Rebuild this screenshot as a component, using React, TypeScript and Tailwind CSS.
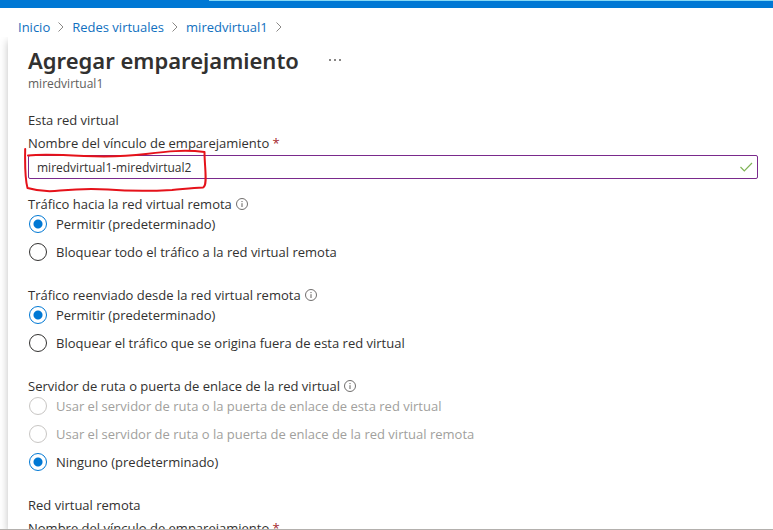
import { Fragment, useState } from "react";

type Option = { value: string; label: string; disabled?: boolean };

function InfoIcon() {
  return (
    <svg className="size-3" viewBox="0 0 12 12" fill="none" stroke="#605e5c" aria-hidden="true">
      <circle cx="6" cy="6" r="5.5" strokeWidth="0.9" />
      <path d="M6 5.2V9" strokeWidth="1" />
      <path d="M6 3v1.1" strokeWidth="1" />
    </svg>
  );
}

function ChevronIcon() {
  return (
    <svg className="h-3 w-2" viewBox="0 0 8 12" fill="none" stroke="#8a8886" aria-hidden="true">
      <path d="M1.5 1.5 6 6 1.5 10.5" />
    </svg>
  );
}

function RadioGroup({ name, legend, options, initial }: { name: string; legend: string; options: Option[]; initial: string }) {
  const [value, setValue] = useState(initial);
  return (
    <div role="radiogroup" aria-labelledby={`${name}-label`} className="mb-[23px]">
      <div className="flex h-5 items-center gap-1">
        <span id={`${name}-label`}>{legend}</span>
        <button type="button" aria-label="Información">
          <InfoIcon />
        </button>
      </div>
      <div className="flex flex-col gap-2">
        {options.map((o) => (
          <label key={o.value} className={`flex h-5 items-center gap-2 ${o.disabled ? "text-[#a19f9d]" : ""}`}>
            <input
              type="radio"
              name={name}
              value={o.value}
              checked={value === o.value}
              disabled={o.disabled}
              onChange={() => setValue(o.value)}
              className="m-px size-[18px] shrink-0 appearance-none rounded-full border border-[#323130] bg-white bg-center bg-no-repeat checked:border-[#0078d4] checked:bg-[radial-gradient(circle,#0078d4_4px,transparent_5px)] disabled:border-[#c8c6c4]"
            />
            {o.label}
          </label>
        ))}
      </div>
    </div>
  );
}

const crumbs = ["Inicio", "Redes virtuales", "miredvirtual1"];

export default function App() {
  const [linkName, setLinkName] = useState("miredvirtual1-miredvirtual2");
  return (
    <div className="flex h-screen flex-col overflow-hidden border-b border-[#b3b0ad] bg-white font-['Open_Sans','Noto_Sans',sans-serif] text-[13px] leading-5 text-[#323130]">
      <div className="flex h-2 shrink-0 justify-end bg-[#0078d4]">
        <div className="h-px w-[73%] bg-[#83d8f5]" />
      </div>

      <nav aria-label="Ruta de navegación" className="flex h-[29px] shrink-0 items-center gap-[7px] pt-2 pl-[18px]">
        {crumbs.map((c) => (
          <Fragment key={c}>
            <a href="#" className="text-[#1070c0]">
              {c}
            </a>
            <ChevronIcon />
          </Fragment>
        ))}
      </nav>

      <div className="flex min-h-0 flex-1 overflow-hidden pl-2">
        <main className="min-w-0 flex-1 pr-[15px] pl-5 shadow-[0_4px_8px_rgba(0,0,0,0.25)]">
          <header className="pt-[7px]">
            <div className="flex h-8 items-center gap-7">
              <h1 className="font-['Noto_Sans',sans-serif] text-[22px] font-semibold">Agregar emparejamiento</h1>
              <button type="button" aria-label="Más opciones" className="flex gap-[3px] p-0.5">
                <span className="size-0.5 rounded-full bg-[#605e5c]" />
                <span className="size-0.5 rounded-full bg-[#605e5c]" />
                <span className="size-0.5 rounded-full bg-[#605e5c]" />
              </button>
            </div>
            <p className="text-xs leading-4 text-[#605e5c]">miredvirtual1</p>
          </header>

          <section className="mt-[18px]">
            <h2 className="mb-[3px]">Esta red virtual</h2>
            <label htmlFor="link-name" className="mb-0.5 block">
              Nombre del vínculo de emparejamiento <span className="text-[#a4262c]">*</span>
            </label>
            <div className="relative mb-[15px]">
              <input
                id="link-name"
                type="text"
                value={linkName}
                onChange={(e) => setLinkName(e.target.value)}
                className="block h-6 w-full rounded-xs border border-[#7a2a8c] bg-white pr-8 pl-2 text-xs outline-none"
              />
              <svg className="absolute top-1.5 right-1 h-3 w-4" viewBox="0 0 16 12" fill="none" stroke="#7fb356" strokeWidth="1.2" aria-hidden="true">
                <path d="M2.5 6 6.3 9.8 14 2" />
              </svg>
              <svg
                className="pointer-events-none absolute -top-2 -left-1 h-[46px] w-[184px]"
                viewBox="0 0 184 46"
                fill="none"
                stroke="#e5121a"
                strokeWidth="2"
                strokeLinecap="round"
                strokeLinejoin="round"
                aria-hidden="true"
              >
                <path d="M1.2 2C1 14 .5 30 3.5 41C12 43.5 24 45 36 43.5C52 42 70 41.500 84 42.500C102 44 130 44 148 43C160 42 168 41 179 40.500C184 39 180.500 20 180.500 5C160 2.500 143 4.500 122 7C98 10 82 10 60 9C40 8 20 7 4 8.500" />
              </svg>
            </div>

            <RadioGroup
              name="trafico"
              legend="Tráfico hacia la red virtual remota"
              initial="permitir"
              options={[
                { value: "permitir", label: "Permitir (predeterminado)" },
                { value: "bloquear", label: "Bloquear todo el tráfico a la red virtual remota" },
              ]}
            />
            <RadioGroup
              name="reenviado"
              legend="Tráfico reenviado desde la red virtual remota"
              initial="permitir"
              options={[
                { value: "permitir", label: "Permitir (predeterminado)" },
                { value: "bloquear", label: "Bloquear el tráfico que se origina fuera de esta red virtual" },
              ]}
            />
            <RadioGroup
              name="puerta"
              legend="Servidor de ruta o puerta de enlace de la red virtual"
              initial="ninguno"
              options={[
                { value: "esta", label: "Usar el servidor de ruta o la puerta de enlace de esta red virtual", disabled: true },
                { value: "remota", label: "Usar el servidor de ruta o la puerta de enlace de la red virtual remota", disabled: true },
                { value: "ninguno", label: "Ninguno (predeterminado)" },
              ]}
            />
          </section>

          <section>
            <h2 className="mb-[3px]">Red virtual remota</h2>
            <label htmlFor="remote-link-name" className="mb-0.5 block">
              Nombre del vínculo de emparejamiento <span className="text-[#a4262c]">*</span>
            </label>
            <input id="remote-link-name" type="text" className="block h-6 w-full rounded-xs border border-[#605e5c] bg-white px-2" />
          </section>
        </main>
      </div>
    </div>
  );
}
